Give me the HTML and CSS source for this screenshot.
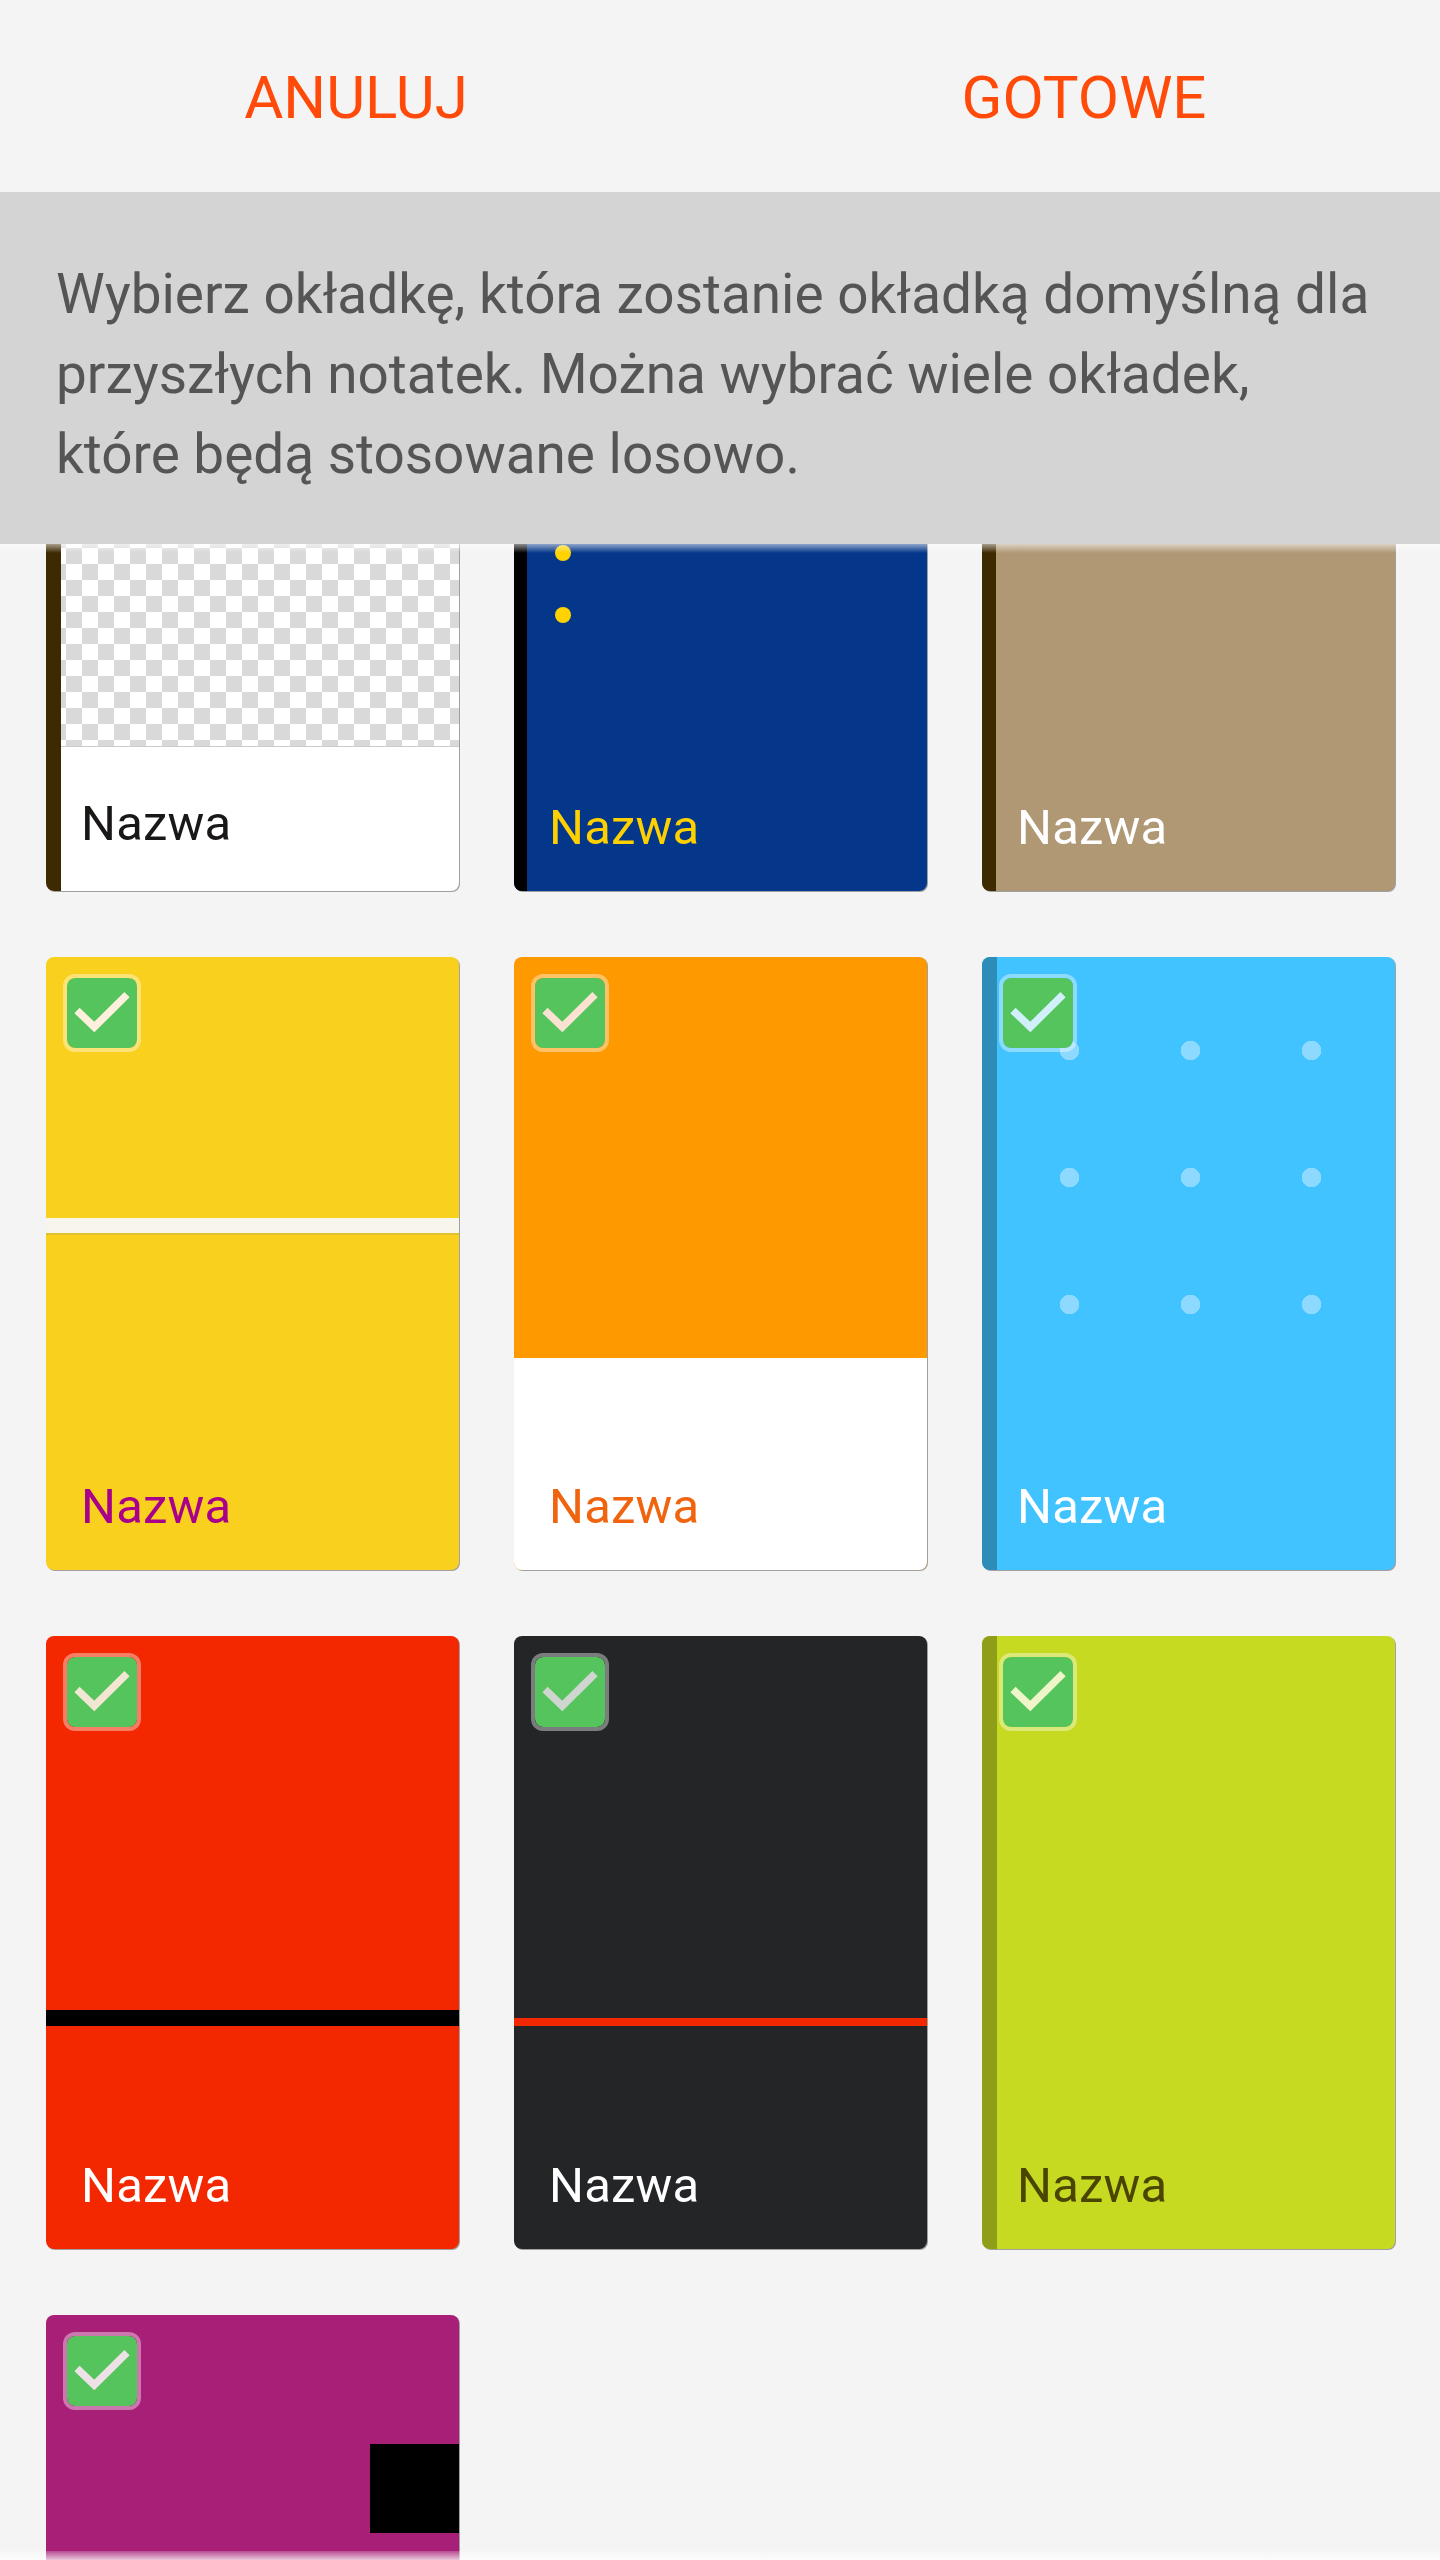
FILE: index.html
```html
<!DOCTYPE html>
<html lang="pl">

<head>
    <meta charset="UTF-8">
    <meta name="viewport" content="width=device-width, initial-scale=1.0">
    <title>Okładki</title>
    <link rel="stylesheet" href="styles.css">
</head>

<body>
    <div class="actions">
        <div class="action">ANULUJ</div>
        <div class="action">GOTOWE</div>
    </div>
    <div class="notice">Wybierz okładkę, która zostanie okładką domyślną dla<br>przyszłych notatek. Można wybrać wiele okładek,<br>które będą stosowane losowo.</div>

    <div class="list">
        <div class="grid">
            <div class="cover cover-clear">
                <div class="spine"></div>
                <div class="checker"></div>
                <div class="name">Nazwa</div>
            </div>
            <div class="cover cover-navy">
                <div class="spine"></div>
                <div class="hole hole-one"></div>
                <div class="hole hole-two"></div>
                <div class="name">Nazwa</div>
            </div>
            <div class="cover cover-tan">
                <div class="spine"></div>
                <div class="name">Nazwa</div>
            </div>

            <div class="cover cover-yellow">
                <div class="band"></div>
                <svg class="check" viewBox="0 0 70 70"><rect width="70" height="70" rx="8"></rect><path d="M10 32.500 L27.300 49 L60 16.700"></path></svg>
                <div class="name">Nazwa</div>
            </div>
            <div class="cover cover-orange">
                <div class="flap"></div>
                <svg class="check" viewBox="0 0 70 70"><rect width="70" height="70" rx="8"></rect><path d="M10 32.500 L27.300 49 L60 16.700"></path></svg>
                <div class="name">Nazwa</div>
            </div>
            <div class="cover cover-sky">
                <div class="spine"></div>
                <div class="dots"></div>
                <svg class="check" viewBox="0 0 70 70"><rect width="70" height="70" rx="8"></rect><path d="M10 32.500 L27.300 49 L60 16.700"></path></svg>
                <div class="name">Nazwa</div>
            </div>

            <div class="cover cover-red">
                <div class="band"></div>
                <svg class="check" viewBox="0 0 70 70"><rect width="70" height="70" rx="8"></rect><path d="M10 32.500 L27.300 49 L60 16.700"></path></svg>
                <div class="name">Nazwa</div>
            </div>
            <div class="cover cover-dark">
                <div class="band"></div>
                <svg class="check" viewBox="0 0 70 70"><rect width="70" height="70" rx="8"></rect><path d="M10 32.500 L27.300 49 L60 16.700"></path></svg>
                <div class="name">Nazwa</div>
            </div>
            <div class="cover cover-lime">
                <div class="spine"></div>
                <svg class="check" viewBox="0 0 70 70"><rect width="70" height="70" rx="8"></rect><path d="M10 32.500 L27.300 49 L60 16.700"></path></svg>
                <div class="name">Nazwa</div>
            </div>

            <div class="cover cover-purple">
                <div class="square"></div>
                <svg class="check" viewBox="0 0 70 70"><rect width="70" height="70" rx="8"></rect><path d="M10 32.500 L27.300 49 L60 16.700"></path></svg>
            </div>
        </div>
    </div>
</body>

</html>
```

FILE: styles.css
```css
* {
    padding: 0;
    margin: 0;
    box-sizing: border-box;
}

html,
body {
    height: 2560px;
    overflow: hidden;
}

body {
    background-color: #f4f4f4;
    font-family: Roboto, "Liberation Sans", sans-serif;
}

.actions {
    height: 192px;
    padding-top: 2px;
    display: flex;
    gap: 16px;
    align-items: center;
}

.action {
    flex: 1;
    text-align: center;
    font-size: 60px;
    color: #ff4a0a;
}

.notice {
    height: 352px;
    padding: 62px 56px 0;
    background-color: #d4d4d4;
    color: #555;
    font-size: 54.9px;
    line-height: 80px;
}

/* the list is scrolled, so its first row runs under the notice */
.list {
    height: 2016px;
    overflow: hidden;
    position: relative;
}

.list::before,
.list::after {
    content: "";
    position: absolute;
    left: 0;
    right: 0;
    height: 9px;
    z-index: 2;
}

.list::before {
    top: 0;
    background: linear-gradient(rgba(255, 255, 255, 0.55), rgba(255, 255, 255, 0));
}

.list::after {
    bottom: 0;
    background: linear-gradient(rgba(255, 255, 255, 0.2), rgba(255, 255, 255, 0.75));
}

.grid {
    display: grid;
    grid-template-columns: repeat(3, 413px);
    grid-auto-rows: 613px;
    column-gap: 55px;
    row-gap: 66px;
    margin: -266px 0 0 46px;
}

.cover {
    position: relative;
    border-radius: 8px;
    box-shadow: 1px 1px 0 #a0a0a0;
}

.spine {
    position: absolute;
    top: 0;
    bottom: 0;
    left: 0;
    width: 15px;
    border-radius: 8px 0 0 8px;
}

.name {
    position: absolute;
    left: 35px;
    top: 521px;
    font-size: 49px;
    line-height: 58px;
    letter-spacing: 0.2px;
}

.check {
    position: absolute;
    top: 21px;
    left: 21px;
    width: 70px;
    height: 70px;
    border-radius: 8px;
    box-shadow: 0 0 0 4px rgba(255, 255, 255, 0.4);
}

.check rect {
    fill: #55c45c;
}

.check path {
    fill: none;
    stroke-width: 7.5;
}

.band {
    position: absolute;
    left: 0;
    right: 0;
}

.cover-clear {
    background-color: #fff;
}

.cover-clear .spine {
    background-color: #3e2a00;
}

.cover-clear .checker {
    position: absolute;
    left: 15px;
    right: 0;
    top: 0;
    height: 469px;
    background-color: #fff;
    background-image: conic-gradient(#d9d9d9 25%, transparent 0 50%, #d9d9d9 0 75%, transparent 0);
    background-size: 32px 32px;
    background-position: 5px -2px;
    border-bottom: 1px solid #ccc;
}

.cover-clear .name {
    top: 517px;
    color: #1a1717;
}

.cover-navy {
    background-color: #04378a;
}

.cover-navy .spine {
    width: 13px;
    background-color: #000;
}

.cover-navy .name {
    color: #ffd000;
}

.hole {
    position: absolute;
    left: 41px;
    width: 16px;
    height: 16px;
    border-radius: 50%;
    background-color: #ffd200;
}

.hole-one {
    top: 267px;
}

.hole-two {
    top: 329px;
}

.cover-tan {
    background-color: #b09875;
}

.cover-tan .spine {
    width: 14px;
    background-color: #3e2a00;
}

.cover-tan .name {
    color: #fff;
}

.cover-yellow {
    background-color: #fad01e;
}

.cover-yellow .band {
    top: 261px;
    height: 17px;
    background-color: #f8f6ec;
    border-bottom: 2px solid #e0c02e;
}

.cover-yellow .check path {
    stroke: #fdf0dc;
}

.cover-yellow .name {
    color: #a8008a;
}

.cover-orange {
    background-color: #ff9900;
}

.cover-orange .flap {
    position: absolute;
    left: 0;
    right: 0;
    top: 401px;
    bottom: 0;
    background-color: #fff;
    border-radius: 0 0 8px 8px;
}

.cover-orange .check path {
    stroke: #fae2d2;
}

.cover-orange .name {
    color: #f0640f;
}

.cover-sky {
    background-color: #40c3ff;
}

.cover-sky .spine {
    background-color: #2d8cb8;
}

/* three by three, each dot in the middle of its tile */
.cover-sky .dots {
    position: absolute;
    top: 30px;
    left: 27px;
    width: 363px;
    height: 381px;
    background-image: radial-gradient(circle at center, #8dd9ff 9.5px, transparent 10px);
    background-size: 121px 127px;
}

.cover-sky .check path {
    stroke: #d2effc;
}

.cover-sky .name {
    color: #fff;
}

.cover-red {
    background-color: #f32700;
}

.cover-red .band {
    top: 374px;
    height: 16px;
    background-color: #000;
}

.cover-red .check path {
    stroke: #f0e6d2;
}

.cover-red .name {
    color: #fff;
}

.cover-dark {
    background-color: #242527;
}

.cover-dark .band {
    top: 382px;
    height: 8px;
    background-color: #f32700;
}

.cover-dark .check path {
    stroke: #cfd5cf;
}

.cover-dark .name {
    color: #fff;
}

.cover-lime {
    background-color: #c5da20;
}

.cover-lime .spine {
    background-color: #8f9e18;
}

.cover-lime .check path {
    stroke: #eef5c8;
}

.cover-lime .name {
    color: #4a4500;
}

.cover-purple {
    background-color: #a81f78;
}

.cover-purple .square {
    position: absolute;
    top: 129px;
    right: 0;
    width: 89px;
    height: 89px;
    background-color: #000;
}

.cover-purple .check path {
    stroke: #ece2e6;
}
```
